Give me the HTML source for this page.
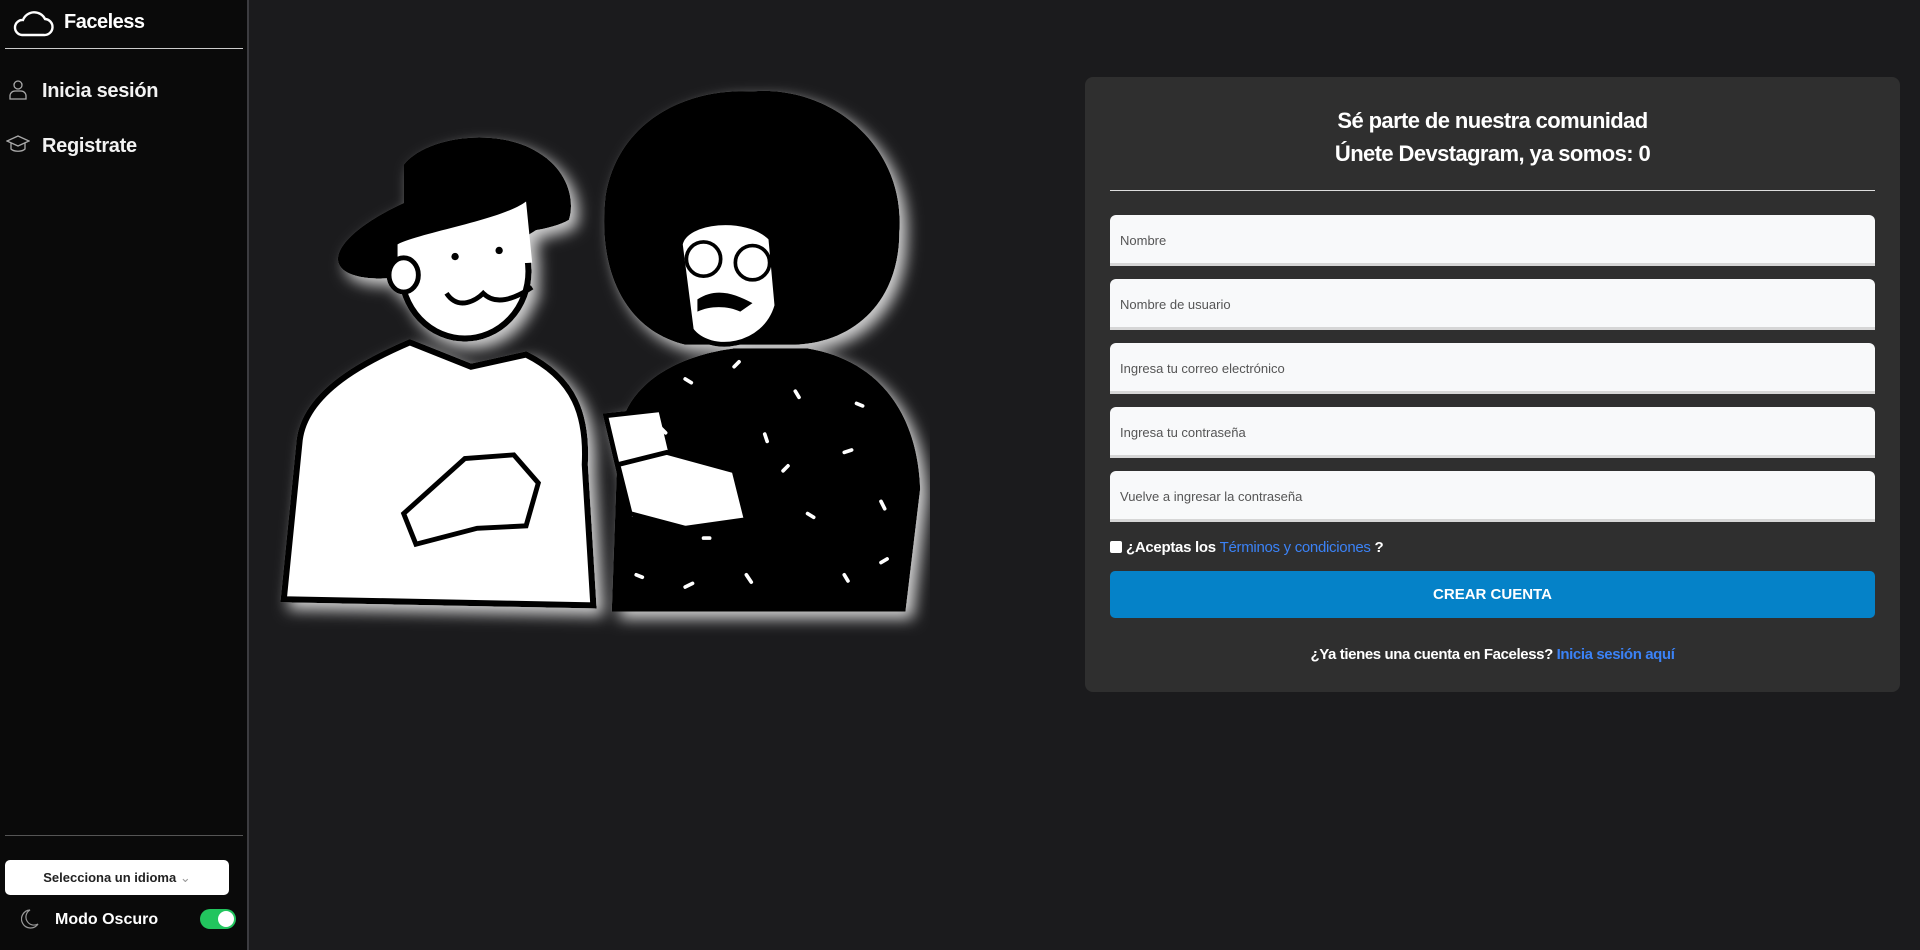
<!DOCTYPE html>
<html><head><meta charset="utf-8"><style>
*{box-sizing:border-box;margin:0;padding:0}
body{width:1920px;height:950px;background:#1b1b1d;font-family:"Liberation Sans",sans-serif;color:#fff;position:relative;overflow:hidden}
.side{position:absolute;left:0;top:0;width:249px;height:950px;background:#0a0a0a;border-right:2px solid #3c3c40}
.abs{position:absolute}
.nav{font-size:20px;font-weight:bold;color:#f2f2f2}
.card{position:absolute;left:1085px;top:77px;width:815px;height:615px;background:#2f2f2f;border-radius:8px}
.inp{position:absolute;left:25px;width:765px;height:51px;background:#f8f9fa;border-radius:6px 6px 0 0;border-bottom:3px solid #d6d6d6;font-size:13px;color:#555;padding:18px 10px}
</style></head><body>
<div class="side">
<svg class="abs" style="left:12px;top:8px" width="42" height="30" viewBox="0 0 42 30"><path d="M10 27 H32 A8 8 0 0 0 33 11 A12 12 0 0 0 11 12 A7.5 7.5 0 0 0 10 27Z" fill="none" stroke="#fff" stroke-width="2.4"/></svg>
<div class="abs" style="left:64px;top:11px;font-size:20px;font-weight:bold;letter-spacing:-0.5px">Faceless</div>
<div class="abs" style="left:5px;top:48px;width:238px;height:1px;background:#ccc"></div>
<svg class="abs" style="left:9px;top:80px" width="18" height="20" viewBox="0 0 18 20"><circle cx="9" cy="5" r="4" fill="none" stroke="#aaa" stroke-width="1.3"/><path d="M1 19 V16 A5 5 0 0 1 6 11 H12 A5 5 0 0 1 17 16 V19Z" fill="none" stroke="#aaa" stroke-width="1.3"/></svg>
<div class="abs nav" style="left:42px;top:80px;letter-spacing:-0.3px">Inicia sesión</div>
<svg class="abs" style="left:6px;top:134px" width="24" height="20" viewBox="0 0 24 20"><path d="M12 2 L23 7 L12 12 L1 7Z M5 9 V15 C8 18 16 18 19 15 V9" fill="none" stroke="#aaa" stroke-width="1.3"/></svg>
<div class="abs nav" style="left:42px;top:135px;letter-spacing:-0.3px">Registrate</div>
<div class="abs" style="left:5px;top:835px;width:238px;height:1px;background:#555"></div>
<div class="abs" style="left:5px;top:860px;width:224px;height:35px;background:#fff;border-radius:5px;color:#222;font-size:13px;font-weight:bold;text-align:center;line-height:35px">Selecciona un idioma <span style="color:#999;font-weight:normal">&#8964;</span></div>
<svg class="abs" style="left:21px;top:909px" width="18" height="20" viewBox="0 0 18 20"><path d="M9 1 A9 9 0 1 0 17 15 A8 8 0 0 1 9 1Z" fill="none" stroke="#999" stroke-width="1.2"/></svg>
<div class="abs" style="left:55px;top:911px;font-size:16px;font-weight:bold">Modo Oscuro</div>
<div class="abs" style="left:200px;top:909px;width:36px;height:20px;background:#22c55e;border-radius:10px"><div style="position:absolute;right:2px;top:2px;width:16px;height:16px;background:#fff;border-radius:50%"></div></div>
</div>

<svg class="abs" style="left:269px;top:73px" width="661" height="563" viewBox="220 60 540 460">
<defs><filter id="g" x="-20%" y="-20%" width="140%" height="140%"><feDropShadow dx="6" dy="6" stdDeviation="6" flood-color="#fff" flood-opacity="0.8"/></filter></defs>
<g filter="url(#g)">
<path d="M232 490 L245 360 C250 320 300 295 335 280 L385 300 L430 290 C470 310 480 340 478 380 L485 495Z" fill="#fff" stroke="#000" stroke-width="5"/>
<ellipse cx="380" cy="222" rx="52" ry="55" fill="#fff" stroke="#000" stroke-width="5"/>
<path d="M330 135 C350 110 410 105 440 125 C465 140 470 165 465 180 C440 195 360 195 330 185Z" fill="#000"/>
<ellipse cx="370" cy="185" rx="98" ry="32" transform="rotate(-18 370 185)" fill="#000"/>
<path d="M325 200 C345 190 410 180 430 165 L435 215 C420 215 340 225 325 230Z" fill="#fff"/>
<ellipse cx="330" cy="225" rx="12" ry="14" fill="#fff" stroke="#000" stroke-width="4"/>
<circle cx="372" cy="210" r="3" fill="#000"/><circle cx="408" cy="205" r="3" fill="#000"/>
<path d="M365 240 C375 255 390 245 395 240 C405 250 420 245 435 235" fill="none" stroke="#000" stroke-width="4"/>
<path d="M330 420 L380 375 L420 372 L440 395 L430 430 L390 432 L340 445Z" fill="#fff" stroke="#000" stroke-width="4"/>
<path d="M500 500 L505 360 C510 310 560 290 600 285 L660 285 C720 295 750 340 752 400 L740 500Z" fill="#000"/>
<path d="M615 75 C680 70 740 120 735 190 C735 245 700 280 650 282 L560 282 C510 270 488 220 495 160 C505 100 560 72 615 75Z" fill="#000"/>
<path d="M556 200 C560 180 610 175 630 195 L635 250 C625 285 580 290 565 270Z" fill="#fff" stroke="#000" stroke-width="4"/>
<circle cx="575" cy="212" r="14" fill="none" stroke="#000" stroke-width="3"/><circle cx="615" cy="215" r="14" fill="none" stroke="#000" stroke-width="3"/>
<path d="M570 245 C585 235 600 240 615 248 L605 255 C595 250 580 250 570 255Z" fill="#000"/>
<path d="M495 340 L540 335 L560 420 L515 425Z" fill="#fff" stroke="#000" stroke-width="4"/>
<path d="M505 380 L545 370 L600 385 L610 425 L560 432 L515 420Z" fill="#fff" stroke="#000" stroke-width="4"/>
<g stroke="#fff" stroke-width="3" stroke-linecap="round"><path d="M560 310 l5 3M600 300 l4 -4M650 320 l3 5M700 330 l5 2M540 350 l4 4M625 355 l2 6M690 370 l6 -2M720 410 l3 6M660 420 l5 3M610 470 l4 6M560 480 l6 -3M520 470 l5 2M690 470 l3 5M640 385 l4 -4M720 460 l5 -3M575 440 l5 0"/></g>
</g>
</svg>

<div class="card">
<div class="abs" style="left:0;width:815px;top:27px;text-align:center;font-size:22px;font-weight:bold;line-height:33px;letter-spacing:-0.6px">Sé parte de nuestra comunidad<br>Únete Devstagram, ya somos: 0</div>
<div class="abs" style="left:25px;top:113px;width:765px;height:1px;background:#ddd"></div>
<div class="inp" style="top:138px">Nombre</div>
<div class="inp" style="top:202px">Nombre de usuario</div>
<div class="inp" style="top:266px">Ingresa tu correo electrónico</div>
<div class="inp" style="top:330px">Ingresa tu contraseña</div>
<div class="inp" style="top:394px">Vuelve a ingresar la contraseña</div>
<div class="abs" style="left:25px;top:462px;font-size:15px;font-weight:bold;letter-spacing:-0.3px"><span style="display:inline-block;width:12px;height:12px;background:#fff;border-radius:2px;vertical-align:-1px;margin-right:4px"></span>¿Aceptas los <span style="color:#3b82f6;font-weight:normal">Términos y condiciones</span> ?</div>
<div class="abs" style="left:25px;top:494px;width:765px;height:47px;background:#0582c8;border-radius:5px;text-align:center;line-height:47px;font-size:15px;font-weight:bold">CREAR CUENTA</div>
<div class="abs" style="left:0;width:815px;top:569px;text-align:center;font-size:15px;font-weight:bold;letter-spacing:-0.4px">¿Ya tienes una cuenta en Faceless? <span style="color:#3b82f6">Inicia sesión aquí</span></div>
</div>
</body></html>
